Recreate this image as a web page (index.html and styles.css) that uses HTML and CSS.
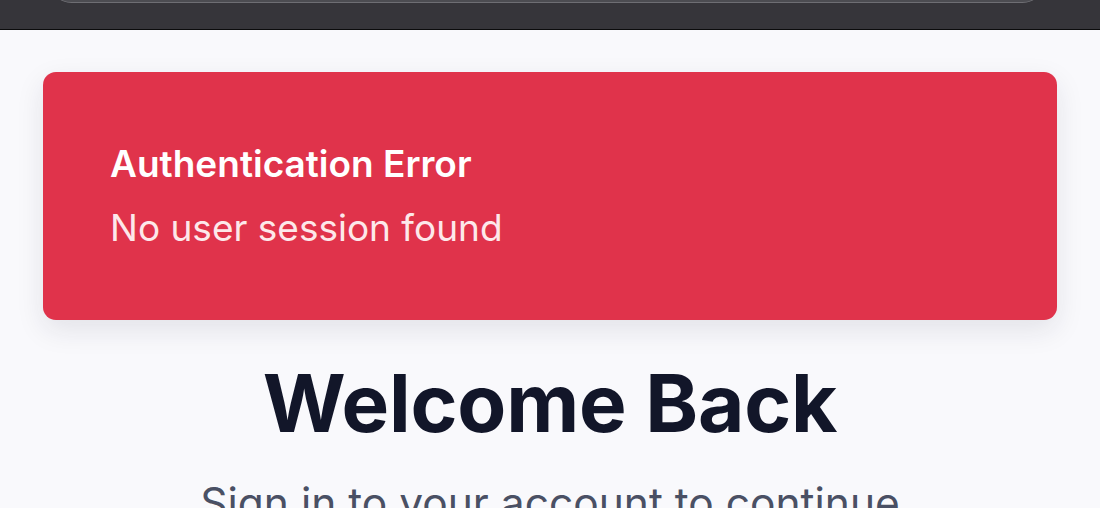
FILE: index.html
```html
<!DOCTYPE html>
<html lang="en">
<head>
<meta charset="utf-8">
<title>Sign in</title>
<link rel="stylesheet" href="styles.css">
</head>
<body>
<div class="topbar"><div class="pill"></div></div>
<main class="page">
  <section class="alert">
    <h2 class="alert-title">Authentication Error</h2>
    <p class="alert-text">No user session found</p>
  </section>
  <h1 class="heading">Welcome Back</h1>
  <p class="sub">Sign in to your account to continue</p>
</main>
</body>
</html>
```
FILE: styles.css
```css
* { box-sizing: border-box; }
html, body { margin: 0; padding: 0; }
body {
  background: #f9f9fc;
  font-family: Inter, "Noto Sans", sans-serif;
  height: 508px;
  overflow: hidden;
}
.topbar {
  height: 30px;
  background: #36353a;
  border-bottom: 1px solid #0b0b0c;
  position: relative;
  overflow: hidden;
}
.pill {
  position: absolute;
  left: 50px;
  right: 56px;
  top: -40px;
  height: 43px;
  border-radius: 22px;
  background: #4c4c51;
  border-bottom: 1px solid #6e6e73;
}
.page {
  padding: 42px 43px 0;
  display: flex;
  flex-direction: column;
  align-items: center;
}
.alert {
  width: 100%;
  height: 248px;
  background: #e0334b;
  border-radius: 13px;
  box-shadow: 0 10px 28px rgba(30, 30, 60, 0.10);
  padding: 70px 67px 0;
  color: #fff;
}
.alert-title {
  margin: 0;
  font-size: 37px;
  font-weight: 600;
  line-height: 44px;
}
.alert-text {
  margin: 20px 0 0;
  font-size: 37px;
  font-weight: 400;
  line-height: 44px;
  color: #fde8ea;
}
.heading {
  margin: 35px 0 0;
  font-size: 80px;
  font-weight: 700;
  line-height: 96px;
  color: #121629;
  letter-spacing: -0.2px;
}
.sub {
  margin: 27px 0 0;
  font-size: 42.5px;
  line-height: 50px;
  color: #4a5064;
  white-space: nowrap;
}
```
